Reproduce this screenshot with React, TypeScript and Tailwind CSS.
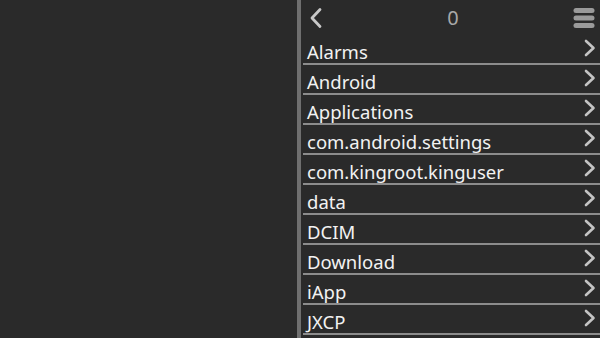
import React from "react";

const items = [
  "Alarms",
  "Android",
  "Applications",
  "com.android.settings",
  "com.kingroot.kinguser",
  "data",
  "DCIM",
  "Download",
  "iApp",
  "JXCP",
];

function Chevron() {
  return (
    <svg width="14" height="18" viewBox="0 0 14 18" className="shrink-0 mb-[2px]">
      <path d="M3 2 L10.5 9 L3 16" fill="none" stroke="#c4c4c4" strokeWidth="2.6" strokeLinecap="round" strokeLinejoin="round" />
    </svg>
  );
}

export default function App() {
  return (
    <div
      className="flex w-[600px] h-[338px] overflow-hidden bg-[#2a2a2a]"
      style={{ fontFamily: '"Noto Sans", "Open Sans", sans-serif' }}
    >
      <div className="w-[297px] shrink-0 bg-[#2a2a2a]" />
      <div className="w-[4px] shrink-0 bg-[#6f6f6f]" />
      <div className="w-[2px] shrink-0" />
      <div className="flex-1 flex flex-col">
        <div className="h-[35px] flex items-center justify-between pl-[6px] pr-[5px]">
          <svg width="14" height="22" viewBox="0 0 14 22">
            <path d="M11 2.5 L3 11 L11 19.5" fill="none" stroke="#c8c8c8" strokeWidth="2.8" strokeLinecap="round" strokeLinejoin="round" />
          </svg>
          <span className="text-[20px] text-[#a8a8a8] leading-none pl-[10px]">0</span>
          <svg width="22" height="22" viewBox="0 0 22 22">
            <rect x="0.5" y="1" width="21" height="5" rx="2.5" fill="#9a9a9a" />
            <rect x="0.5" y="8.5" width="21" height="5" rx="2.5" fill="#9a9a9a" />
            <rect x="0.5" y="16" width="21" height="5" rx="2.5" fill="#9a9a9a" />
          </svg>
        </div>
        {items.map((name) => (
          <div
            key={name}
            className="h-[30px] shrink-0 flex items-center justify-between pl-[4px] pr-[3px] border-b-2 border-[#8c8c8c]"
          >
            <span className="text-[18.5px] text-[#f2f2f2] leading-none pt-[6px]">{name}</span>
            <Chevron />
          </div>
        ))}
      </div>
    </div>
  );
}
